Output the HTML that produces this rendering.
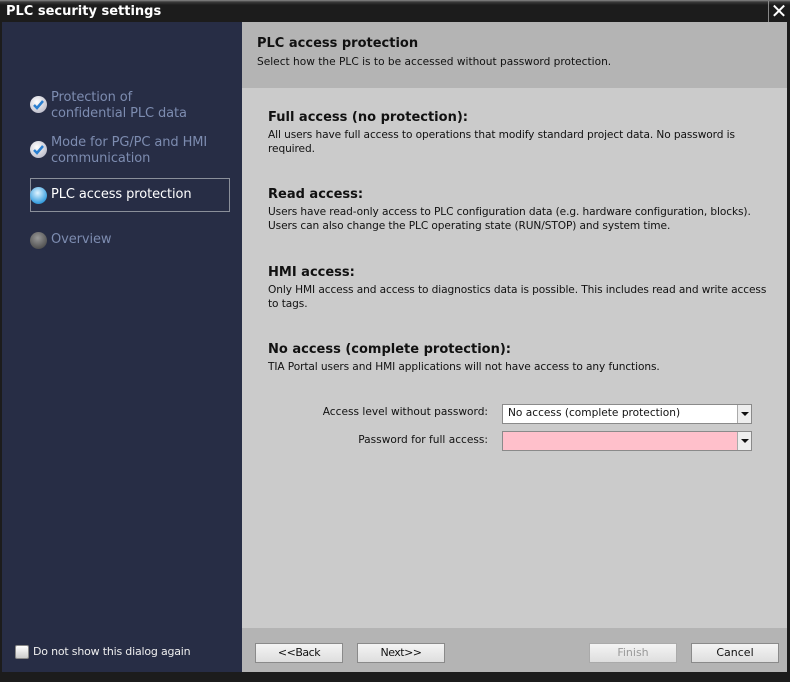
<!DOCTYPE html>
<html><head><meta charset="utf-8"><style>
*{margin:0;padding:0;box-sizing:border-box}
body{width:790px;height:682px;background:#1c1c1c;font-family:"DejaVu Sans","Liberation Sans",sans-serif;position:relative;overflow:hidden;font-size:10.6px;color:#111}
.abs{position:absolute}
#title{left:0;top:0;width:790px;height:22px;background:linear-gradient(#8a8a8a 0,#3a3a3a 2px,#1c1c1c 5px,#1c1c1c);color:#fff;font-weight:bold;font-size:13px;padding:4px 0 0 6px}
#close{left:768px;top:1px;width:21px;height:21px;border-left:1px solid #888;color:#fff;font-size:20px;line-height:21px;text-align:center;font-weight:bold}
#left{left:2px;top:22px;width:240px;height:650px;background:#272d45}
.step{position:absolute;left:51px;color:#7d8cb0;font-size:13px;line-height:16px;letter-spacing:-0.1px}
.ic{position:absolute;left:30px;width:17px;height:17px;border-radius:50%}
#hdr{left:242px;top:22px;width:545px;height:66px;background:#b4b4b4}
#cont{left:242px;top:88px;width:545px;height:540px;background:#cbcbcb}
#foot{left:242px;top:628px;width:545px;height:44px;background:#b4b4b4}
h3{position:absolute;left:268px;font-size:13px;font-weight:bold;color:#111}
.p{position:absolute;left:268px;font-size:10.6px;line-height:14px;width:505px;color:#111;letter-spacing:-0.1px}
.btn{position:absolute;top:643px;height:20px;border:1px solid #8a8a8a;background:linear-gradient(#f4f4f4,#dedede);font-size:11px;text-align:center;line-height:18px;color:#111}
.fld{position:absolute;left:502px;width:250px;height:20px;border:1px solid #8a8a8a}
.dd{position:absolute;right:0;top:0;width:14px;height:18px;border-left:1px solid #aaa;background:#eee}
.dd:after{content:"";position:absolute;left:3px;top:7px;border-left:4px solid transparent;border-right:4px solid transparent;border-top:4px solid #111}
</style></head><body>
<div class="abs" id="title">PLC security settings</div>
<div class="abs" id="close">✕</div>
<div class="abs" id="left"></div>
<div class="ic" style="top:96px;background:radial-gradient(circle at 40% 35%,#fff,#aab);"><svg width="17" height="17"><path d="M4 9l3 3 6-7" stroke="#2a7fd0" stroke-width="2.5" fill="none"/></svg></div>
<div class="step" style="top:90px">Protection of<br>confidential PLC data</div>
<div class="ic" style="top:141px;background:radial-gradient(circle at 40% 35%,#fff,#aab);"><svg width="17" height="17"><path d="M4 9l3 3 6-7" stroke="#2a7fd0" stroke-width="2.5" fill="none"/></svg></div>
<div class="step" style="top:135px">Mode for PG/PC and HMI<br>communication</div>
<div class="abs" style="left:30px;top:178px;width:200px;height:34px;border:1px solid #8a8f9a"></div>
<div class="ic" style="top:187px;background:radial-gradient(circle at 45% 35%,#e0f4ff,#3aa0e0 70%,#1a5a90)"></div>
<div class="step" style="top:187px;color:#fff">PLC access protection</div>
<div class="ic" style="top:232px;background:radial-gradient(circle at 45% 35%,#999,#555 70%,#333)"></div>
<div class="step" style="top:232px">Overview</div>
<div class="abs" style="left:15px;top:645px;width:14px;height:14px;border-radius:2px;background:linear-gradient(#fff,#ccc);border:1px solid #888"></div>
<div class="abs" style="left:33px;top:645px;color:#eee;font-size:11px;letter-spacing:-0.2px">Do not show this dialog again</div>
<div class="abs" id="hdr"></div>
<div class="abs" style="left:257px;top:36px;font-size:13px;font-weight:bold">PLC access protection</div>
<div class="abs" style="left:257px;top:56px;font-size:10.6px">Select how the PLC is to be accessed without password protection.</div>
<div class="abs" id="cont"></div>
<h3 style="top:110px">Full access (no protection):</h3>
<div class="p" style="top:128px">All users have full access to operations that modify standard project data. No password is required.</div>
<h3 style="top:187px">Read access:</h3>
<div class="p" style="top:205px;width:515px">Users have read-only access to PLC configuration data (e.g. hardware configuration, blocks). Users can also change the PLC operating state (RUN/STOP) and system time.</div>
<h3 style="top:265px">HMI access:</h3>
<div class="p" style="top:283px">Only HMI access and access to diagnostics data is possible. This includes read and write access to tags.</div>
<h3 style="top:342px">No access (complete protection):</h3>
<div class="p" style="top:360px">TIA Portal users and HMI applications will not have access to any functions.</div>
<div class="abs" style="left:300px;top:406px;width:188px;text-align:right">Access level without password:</div>
<div class="fld" style="top:404px;background:#fff"><span style="position:absolute;left:5px;top:2px">No access (complete protection)</span><div class="dd"></div></div>
<div class="abs" style="left:300px;top:434px;width:188px;text-align:right">Password for full access:</div>
<div class="fld" style="top:431px;background:#ffc0cb"><div class="dd"></div></div>
<div class="abs" id="foot"></div>
<div class="btn" style="left:255px;width:88px;letter-spacing:-0.5px">&lt;&lt;Back</div>
<div class="btn" style="left:357px;width:88px;letter-spacing:-0.5px">Next&gt;&gt;</div>
<div class="btn" style="left:589px;width:88px;color:#999;border-color:#aaa">Finish</div>
<div class="btn" style="left:691px;width:88px">Cancel</div>
</body></html>
